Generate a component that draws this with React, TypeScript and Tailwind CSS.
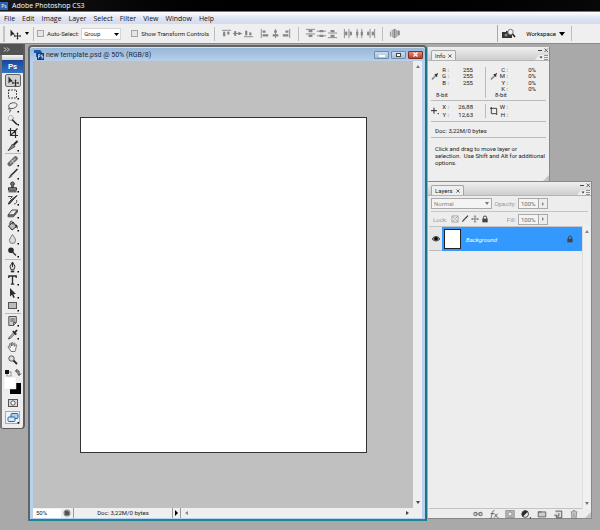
import type { ReactNode } from 'react';

const K = '#2b2b2b';

function Icon({ children, size = 'size-3' }: { children: ReactNode; size?: string }) {
  return (
    <svg viewBox="0 0 12 12" className={`${size} shrink-0`} fill="none" stroke={K} strokeWidth="1" aria-hidden="true">
      {children}
    </svg>
  );
}

const moveGlyph = (
  <>
    <path d="M1.5 1.5v7l1.8-1.7 2.7-.4z" fill={K} stroke="none" />
    <path d="M8.500 5v6M5.500 8h6" />
    <path d="M7.300 5.700l1.200-1.500 1.200 1.500zM7.300 10.300l1.200 1.500 1.200-1.500zM6.200 6.800L4.700 8l1.500 1.200zM10.800 6.800L12 8l-1.200 1.200z" fill={K} stroke="none" />
  </>
);
const brushGlyph = (
  <>
    <path d="M10.500 1L5 6.500" strokeWidth="1.600" />
    <path d="M5.800 6.200C5 9 3 10.500 1 10.300 2.300 9.500 2.500 7 4.500 5.500z" fill="#555" stroke="none" />
  </>
);
const dropperGlyph = (
  <>
    <path d="M7 4.500L2.500 9 1.500 11l2-.8L8 5.700" strokeWidth=".8" fill="#ddd" />
    <path d="M5.800 3.200l3.500 3.500M7.500 5L10 2" strokeWidth="1.900" />
  </>
);

const toolGroups: { name: string; menu: boolean; glyph: ReactNode }[][] = [
  [
    { name: 'Move', menu: false, glyph: moveGlyph },
    { name: 'Rectangular Marquee', menu: true, glyph: <rect x="1.500" y="2" width="8" height="8" strokeDasharray="1.600 1.200" /> },
    {
      name: 'Lasso',
      menu: true,
      glyph: <path d="M3.500 7.500C1 6.500 1 3.500 4 2.300s6.500-.3 6 2-4.500 4-7 3-1.500 2 .2 1.700S3 11 2 11.500" stroke="#555" />,
    },
    {
      name: 'Quick Selection',
      menu: true,
      glyph: (
        <>
          <circle cx="3.800" cy="4" r="2.500" stroke="#777" strokeDasharray="1 1" />
          <path d="M5 5.500l5 5" strokeWidth="1.700" />
        </>
      ),
    },
    { name: 'Crop', menu: false, glyph: <path d="M3.500 1v7.500H11M1 3.500h7.500V11M3.500 8.500L10.500 1.500" strokeWidth="1.200" /> },
    {
      name: 'Slice',
      menu: true,
      glyph: (
        <>
          <path d="M10.500 1L6.500 5" strokeWidth="2" />
          <path d="M5.500 4L8 6.500 4 9l-3 1.800z" fill="#888" strokeWidth=".7" />
        </>
      ),
    },
  ],
  [
    {
      name: 'Spot Healing Brush',
      menu: true,
      glyph: (
        <>
          <path d="M2.800 9L8.500 3.500" stroke="#666" strokeWidth="4.500" strokeLinecap="round" />
          <path d="M3.500 8L8 3.800" stroke="#aaa" strokeWidth="1.700" strokeLinecap="round" />
          <path d="M4.500 5l3 3.200" stroke="#eee" strokeWidth=".7" />
        </>
      ),
    },
    { name: 'Brush', menu: true, glyph: brushGlyph },
    {
      name: 'Clone Stamp',
      menu: true,
      glyph: (
        <>
          <circle cx="5.500" cy="2.800" r="1.800" fill="#777" />
          <path d="M4.800 4.500v2h1.400v-2M1.500 6.800h8v2.400h-8zM1.500 10.800h8" fill="#999" />
        </>
      ),
    },
    {
      name: 'History Brush',
      menu: true,
      glyph: (
        <>
          <path d="M10 1.500L5 7C4 9 2.500 10 1 10c1.300-1 1.500-3 3-4z" fill="#666" />
          <path d="M1 2.500h4.500L3 5M9.500 6c1 2-.5 4-2.500 4" stroke="#555" />
        </>
      ),
    },
    {
      name: 'Eraser',
      menu: true,
      glyph: (
        <>
          <path d="M1 8l4-5h5.500l-4 5z" fill="#eee" stroke="#444" />
          <path d="M1 8v1.800h5.500l4-4.800V3l-4 5z" fill="#777" stroke="#444" strokeWidth=".8" />
        </>
      ),
    },
    {
      name: 'Paint Bucket',
      menu: true,
      glyph: (
        <>
          <path d="M1.500 6L6 2l3.500 4.500L5 10z" fill="#bbb" />
          <path d="M3 4.500C2.500 0 6 0 6 4.500" />
          <path d="M8.500 4.500c2 0 2.500 2 2 4.500-1-1-1-2.500-2.500-2.500z" fill={K} stroke="none" />
        </>
      ),
    },
    { name: 'Blur', menu: true, glyph: <path d="M5.500 1.500C7 4 8.500 5.500 8.500 7.500a3 3 0 01-6 0c0-2 1.500-3.500 3-6z" fill="#ddd" stroke="#777" /> },
    {
      name: 'Dodge',
      menu: true,
      glyph: (
        <>
          <circle cx="4" cy="4.300" r="2.800" fill={K} stroke="none" />
          <path d="M5.500 6L9 9.500" strokeWidth="1.200" />
        </>
      ),
    },
  ],
  [
    {
      name: 'Pen',
      menu: true,
      glyph: (
        <>
          <path d="M5.500 1L3 5.500l1.200 3.300h2.600L8 5.500zM5.500 1v5" fill="#ddd" />
          <path d="M3.800 10.500h3.400" strokeWidth="1.700" />
        </>
      ),
    },
    { name: 'Horizontal Type', menu: true, glyph: <path d="M1.800 4V2h7.400v2M3.800 10.200h3.400M5.500 2v8" strokeWidth="1.300" /> },
    { name: 'Path Selection', menu: true, glyph: <path d="M3 1v8.500l2-1.800L6.300 11l1.500-.7-1.400-3L9 7z" fill={K} stroke="none" /> },
    { name: 'Rectangle', menu: true, glyph: <rect x="1.500" y="2.500" width="8" height="6" fill="#bbb" stroke="#555" /> },
  ],
  [
    {
      name: 'Notes',
      menu: true,
      glyph: (
        <>
          <path d="M1.800 1.500h7.500v6l-2.800 3H1.800z" fill="#ccc" stroke="#555" />
          <path d="M3.300 4h4.500M3.300 6h4.500M6.500 10.500v-3h2.800" stroke="#555" />
        </>
      ),
    },
    { name: 'Eyedropper', menu: true, glyph: dropperGlyph },
    {
      name: 'Hand',
      menu: false,
      glyph: (
        <path d="M4 10.500L1.200 6.200c-.5-1 .7-1.300 1.300-.5l.8.900-.8-3.400c0-1 1-1 1.300-.2L4.500 5V2c.2-.9 1.200-.9 1.300 0v2.500l.9-2.200c.5-.7 1.300-.4 1.200.5l-.5 2.500 1.300-1.500c.6-.5 1.200.1.900.8C8.500 7.500 9 9 8 10.500z" fill="#f4f4f4" stroke="#555" strokeWidth=".8" />
      ),
    },
    {
      name: 'Zoom',
      menu: false,
      glyph: (
        <>
          <circle cx="4.500" cy="4.500" r="2.700" fill="#ddd" stroke="#555" />
          <path d="M6.500 6.500l3.500 3.500" strokeWidth="1.800" />
        </>
      ),
    },
  ],
];

function Tools() {
  return (
    <aside aria-label="Tools" className="flex w-[25px] shrink-0 flex-col self-start rounded-b border-r-2 border-b border-[#5c5c5c] bg-[#ededed]">
      <div className="flex h-[11px] shrink-0 items-center border-l border-[#555] bg-[#535353] pl-[2px]">
        <svg viewBox="0 0 8 5" className="h-[5px] w-2" fill="none" stroke="#ddd" aria-hidden="true">
          <path d="M1 .5l2 2-2 2M4 .5l2 2-2 2" />
        </svg>
      </div>
      <div className="flex flex-col items-center border-l-2 border-[#777] pb-1">
        <div className="h-[5px] w-full bg-gradient-to-b from-[#f7f7f7] to-[#cfcfcf]" />
        <div className="mb-px flex h-[13px] w-full items-center justify-center bg-gradient-to-b from-[#1a4596] to-[#3472c6] text-[8px] leading-[13px] font-semibold text-white">Ps</div>
        {toolGroups.map((group, g) => (
          <div key={g} className={g === 0 ? 'flex flex-col' : 'mt-px flex flex-col border-t border-[#bbb]'}>
            {group.map((tool) => (
              <button
                key={tool.name}
                type="button"
                aria-label={tool.name}
                className={
                  tool.name === 'Move'
                    ? 'flex h-[13px] w-4 items-center justify-center rounded-[2px] border border-[#666] bg-[#d0d0d0]'
                    : 'flex h-[13px] w-4 items-center justify-center'
                }
              >
                <Icon>
                  {tool.glyph}
                  {tool.menu && <rect x="10.500" y="10" width="1.500" height="1.500" fill="#000" stroke="none" />}
                </Icon>
              </button>
            ))}
          </div>
        ))}
        <svg viewBox="0 0 20 29" className="h-[29px] w-5" aria-label="Foreground and background colors" role="img">
          <rect x="4" y="6" width="4" height="4" fill="#fff" stroke="#666" strokeWidth=".7" />
          <rect x="2" y="4" width="4" height="4" fill="#111" />
          <path d="M13 5h3v4M14.500 3L12.500 5l2 2M14.500 7.500l1.500 2 2-2" fill="none" stroke="#333" />
          <rect x="7" y="17" width="11" height="11" fill="#000" />
          <rect x="1" y="11" width="12" height="12" fill="#fff" stroke="#e0e0e0" strokeWidth=".5" />
        </svg>
        <button type="button" aria-label="Quick mask" className="flex h-4 items-center">
          <Icon>
            <rect x="1.500" y="2.500" width="9" height="7" fill="#ddd" stroke="#555" />
            <circle cx="6" cy="6" r="2.200" fill="#fff" stroke="#555" />
          </Icon>
        </button>
        <button type="button" aria-label="Screen mode" className="flex h-[13px] w-[15px] items-center justify-center border border-[#aaa] bg-[#f3f3f3]">
          <Icon>
            <rect x="4" y="1.500" width="7" height="5" rx="1" fill="#aad0f2" stroke="#2767a8" />
            <rect x="1" y="5" width="7" height="4.500" rx="1" fill="#d8ebfb" stroke="#2767a8" />
            <rect x="10.500" y="10" width="1.500" height="1.500" fill="#000" stroke="none" />
          </Icon>
        </button>
      </div>
    </aside>
  );
}

const alignGroups: { name: string; d: string }[][] = [
  [
    { name: 'Align top edges', d: 'M1 2.500h10M3.500 4v5M8 4v3' },
    { name: 'Align vertical centers', d: 'M1 6h10M3.500 3.500v5M8 4.500v3' },
    { name: 'Align bottom edges', d: 'M1 9.500h10M3.500 3v5M8 5v3' },
  ],
  [
    { name: 'Align left edges', d: 'M2.500 1v10M4 4h3M4 8h6' },
    { name: 'Align horizontal centers', d: 'M6 1v10M4.500 4h3M3 8h6' },
    { name: 'Align right edges', d: 'M9.500 1v10M5 4h3M2 8h6' },
  ],
  [
    { name: 'Distribute top edges', d: 'M1 1.500h10M1 6.500h10M4 3.500h4M4 8.500h4' },
    { name: 'Distribute vertical centers', d: 'M1 3.500h10M1 8.500h10M4 3.500h4M4 8.500h4' },
    { name: 'Distribute bottom edges', d: 'M1 5.500h10M1 10.500h10M4 3.500h4M4 8.500h4' },
  ],
  [
    { name: 'Distribute left edges', d: 'M1.500 1v10M6.500 1v10M3.500 4v4M8.500 4v4' },
    { name: 'Distribute horizontal centers', d: 'M3.500 1v10M8.500 1v10M3.500 4v4M8.500 4v4' },
    { name: 'Distribute right edges', d: 'M5.500 1v10M10.500 1v10M3.500 4v4M8.500 4v4' },
  ],
];

function AlignButton({ name, d }: { name: string; d: string }) {
  const thick = d.slice(d.lastIndexOf('M', d.lastIndexOf('M') - 1));
  return (
    <button type="button" aria-label={name} className="flex w-[11px] justify-center">
      <svg viewBox="0 0 12 12" className="size-[11px]" fill="none" stroke="#868686" aria-hidden="true">
        <path d={d} />
        <path d={thick} strokeWidth="2.400" />
      </svg>
    </button>
  );
}

const Rule = () => <span className="h-[14px] w-px shrink-0 bg-[#bdbdbd]" />;

function OptionsBar() {
  return (
    <div className="flex h-5 shrink-0 items-center border-b border-[#8b8b8b] bg-[#efefef] font-[Roboto,sans-serif] text-[6px] text-[#222]">
      <span className="ml-[3px] h-4 w-[2px] border-x border-[#c4c4c4]" />
      <button type="button" aria-label="Move tool options" className="ml-1 flex w-5 items-center gap-1">
        <Icon>{moveGlyph}</Icon>
        <svg viewBox="0 0 4 3" className="h-[3px] w-1" aria-hidden="true"><path d="M0 0h4L2 3z" /></svg>
      </button>
      <span className="ml-1 h-[14px] w-px bg-[#bdbdbd]" />
      <label className="ml-[3px] flex items-center gap-[3px]">
        <input type="checkbox" className="size-[7px] appearance-none border border-[#a5a5a5] bg-[#e5e5e5]" />
        Auto-Select:
      </label>
      <span className="relative ml-[2px] flex">
        <select aria-label="Auto-select target" className="h-3 w-10 appearance-none border border-[#d5d5d5] bg-white pl-[2px] leading-[10px]">
          <option>Group</option>
          <option>Layer</option>
        </select>
        <svg viewBox="0 0 5 3" className="pointer-events-none absolute top-[5px] right-[2px] h-[3px] w-[5px]" aria-hidden="true"><path d="M0 0h5L2.500 3z" /></svg>
      </span>
      <label className="ml-[10px] flex items-center gap-[3px] whitespace-nowrap">
        <input type="checkbox" className="size-[7px] appearance-none border border-[#a5a5a5] bg-[#e5e5e5]" />
        Show Transform Controls
      </label>
      <div className="ml-[5px] flex items-center gap-[6px]">
        <Rule />
        <div className="flex items-center gap-[5px]">
          {alignGroups.slice(0, 2).map((group, i) => (
            <div key={i} className="flex">{group.map((a) => <AlignButton key={a.name} {...a} />)}</div>
          ))}
        </div>
        <Rule />
        <div className="flex items-center gap-[5px]">
          {alignGroups.slice(2).map((group, i) => (
            <div key={i} className="flex">{group.map((a) => <AlignButton key={a.name} {...a} />)}</div>
          ))}
        </div>
        <Rule />
        <AlignButton name="Auto-align layers" d="M3.500 2v8M8.500 2v8M1.500 4v5M6 1v10M10.500 3v5" />
      </div>
      <div className="ml-auto flex items-center">
        <span className="h-[17px] w-px bg-[#aaa]" />
        <button type="button" aria-label="Go to Bridge" className="ml-1 flex">
          <svg viewBox="0 0 14 12" className="h-3 w-[14px]" fill="none" aria-hidden="true">
            <path d="M0 4h4V3h3v1h3v6H0z" fill="#333" />
            <circle cx="4" cy="7" r="1.500" fill="#888" />
            <circle cx="8.500" cy="4" r="2.700" fill="#eee" stroke="#777" />
            <path d="M10.500 6l2.500 3" stroke="#222" strokeWidth="1.500" />
          </svg>
        </button>
        <button type="button" className="ml-[10px] flex items-center gap-[3px] text-black">
          Workspace
          <svg viewBox="0 0 6 4" className="h-1 w-[6px]" aria-hidden="true"><path d="M0 0h6L3 4z" /></svg>
        </button>
        <span className="mr-7 ml-[6px] h-[15px] w-px bg-[#bdbdbd]" />
      </div>
    </div>
  );
}

function DocumentWindow() {
  const winBtn = 'flex h-2 w-[15px] items-center justify-center rounded-[1px] border border-[#6f8cab] bg-gradient-to-b from-[#c8dcf1] to-[#a4c0de]';
  return (
    <main className="mt-px flex min-w-0 flex-1 flex-col rounded-t-[4px] border-2 border-t-[#5e6468] border-r-[#1b7387] border-b-[#1b8699] border-l-[#5e6468] bg-[#b9d1ec]">
      <header className="flex h-[14px] shrink-0 items-center rounded-t-[3px] border-t border-[#d8e6f4] bg-gradient-to-b from-[#98b7d8] to-[#b7cfe9] pr-[2px] pl-1">
        <svg viewBox="0 0 10 10" className="size-[10px]" aria-hidden="true">
          <path d="M0 0h6l2 2v5H2V3H0z" fill="#1f57a8" />
          <rect x="3" y="3" width="7" height="7" fill="#123b7a" />
          <path d="M4.500 8.500v-4h1.500v2H4.500M9 5H7.500v1.500H9V8H7.300" fill="none" stroke="#cfe3ff" strokeWidth=".8" />
        </svg>
        <h1 className="ml-[2px] flex-1 text-[7px] leading-3 text-[#1a2a40]">new template.psd @ 50% (RGB/8)</h1>
        <div className="flex gap-[2px]">
          <button type="button" aria-label="Minimize" className={winBtn}><span className="mt-[2px] h-[2px] w-[6px] border border-white bg-[#555]" /></button>
          <button type="button" aria-label="Maximize" className={winBtn}><span className="h-1 w-[5px] border border-[#444] bg-white" /></button>
          <button type="button" aria-label="Close document" className="flex h-2 w-[15px] items-center justify-center rounded-[1px] border border-[#7d3026] bg-gradient-to-b from-[#e08c7a] to-[#c33a20]">
            <svg viewBox="0 0 5 5" className="size-[5px]" stroke="#fff" strokeWidth="1.300" aria-hidden="true"><path d="M.5.5l4 4M4.500.500l-4 4" /></svg>
          </button>
        </div>
      </header>
      <div className="mr-[3px] mb-px ml-[3px] flex min-h-0 flex-1 flex-col">
        <div className="flex flex-1">
          <div className="flex flex-1 bg-[#c0c0c0] pt-14 pr-[46px] pb-[55px] pl-[47px]">
            <div className="flex-1 border border-[#333] bg-white" />
          </div>
          <div className="flex w-[9px] flex-col items-center justify-between bg-[#eee] py-1">
            <svg viewBox="0 0 4 3" className="h-[3px] w-1" fill="#777" aria-hidden="true"><path d="M0 3h4L2 0z" /></svg>
            <svg viewBox="0 0 4 3" className="h-[3px] w-1" fill="#444" aria-hidden="true"><path d="M0 0h4L2 3z" /></svg>
          </div>
        </div>
        <footer className="flex h-[10px] items-center bg-[#efefef] text-[6px] leading-[10px] text-[#222]">
          <input aria-label="Zoom level" defaultValue="50%" className="h-[9px] w-7 bg-white pl-[3px]" />
          <span className="flex w-3 justify-center">
            <svg viewBox="0 0 8 8" className="size-2" aria-hidden="true">
              <circle cx="4" cy="4" r="3.500" fill="#888" />
              <path d="M2 3h3v3M2 5h2" stroke="#222" fill="none" />
            </svg>
          </span>
          <span className="w-[100px] border-x border-[#999] text-center">Doc: 3,22M/0 bytes</span>
          <button type="button" aria-label="Status menu" className="flex h-full w-2 items-center justify-center border-r border-[#999]">
            <svg viewBox="0 0 3 6" className="h-[6px] w-[3px]" aria-hidden="true"><path d="M0 0v6l3-3z" /></svg>
          </button>
          <span className="flex flex-1 justify-between pr-[13px] pl-1">
            <svg viewBox="0 0 3 4" className="h-1 w-[3px]" fill="#888" aria-hidden="true"><path d="M3 0v4L0 2z" /></svg>
            <svg viewBox="0 0 3 4" className="h-1 w-[3px]" fill="#444" aria-hidden="true"><path d="M0 0v4l3-2z" /></svg>
          </span>
        </footer>
      </div>
    </main>
  );
}

function PanelHeader({ title }: { title: string }) {
  return (
    <header className="flex h-[14px] shrink-0 items-end border-b border-[#b5b5b5] bg-gradient-to-b from-[#f0f0f0] to-[#cdcdcd] pl-[3px]">
      <h2 className="flex h-[10px] items-center gap-[3px] rounded-t-[2px] border border-b-0 border-[#a5a5a5] bg-[#eee] px-[3px] leading-[9px]">
        {title}
        <button type="button" aria-label={`Close ${title}`}>
          <svg viewBox="0 0 5 5" className="size-1" stroke="#444" aria-hidden="true"><path d="M.5.5l4 4M4.500.500l-4 4" /></svg>
        </button>
      </h2>
      <button type="button" aria-label={`${title} panel menu`} className="ml-auto flex">
        <svg viewBox="0 0 14 13" className="h-[13px] w-[14px]" fill="none" aria-hidden="true">
          <path d="M0 13l4-5h10v5z" fill="#eee" />
          <path d="M3 3.500h4" stroke="#444" />
          <path d="M9.500 1.500l3.500 3.500M13 1.500L9.500 5" stroke="#444" strokeWidth=".8" />
          <path d="M4.500 9.500h3L6 11.500z" fill="#333" />
          <path d="M9 8.500h4M9 10.500h4M9 12.500h4" stroke="#777" strokeWidth=".8" />
        </svg>
      </button>
    </header>
  );
}

function Readout({ rows, depth, icon }: { rows: [string, string][]; depth?: string; icon: ReactNode }) {
  return (
    <div className="flex flex-1 gap-px">
      <span className={depth ? 'mt-[5px] w-2' : 'flex w-2 items-center'}>{icon}</span>
      <dl className="flex flex-1 flex-col justify-between leading-[6px]">
        {rows.map(([k, v], i) => (
          <div key={i} className="flex h-[6px]">
            <dt className="flex w-[9px] shrink-0 justify-end whitespace-nowrap">{k && `${k} :`}</dt>
            <dd className="ml-auto">{v}</dd>
          </div>
        ))}
        {depth && <div className="-ml-1 whitespace-nowrap">{depth}</div>}
      </dl>
    </div>
  );
}

function InfoPanel() {
  const dropper = <Icon size="size-2">{dropperGlyph}</Icon>;
  return (
    <section className="flex h-[134px] w-[122px] flex-col border-r border-[#888] bg-[#eee]">
      <PanelHeader title="Info" />
      <div className="mx-[3px] flex h-10 gap-1 border-b border-[#bbb] pt-[6px] pb-[2px]">
        <div className="flex w-[55px] border-r border-[#bbb] pr-3">
          <Readout icon={dropper} depth="8-bit" rows={[['R', '255'], ['G', '255'], ['B', '255'], ['', '']]} />
        </div>
        <div className="flex flex-1 pr-[10px]">
          <Readout icon={dropper} depth="8-bit" rows={[['C', '0%'], ['M', '0%'], ['Y', '0%'], ['K', '0%']]} />
        </div>
      </div>
      <div className="mx-[3px] flex h-[21px] gap-1 border-b border-[#bbb] py-[3px]">
        <div className="flex w-[55px] border-r border-[#bbb] pr-3">
          <Readout
            icon={<Icon size="size-2"><path d="M4.500 1v9M0 5.500h9M10 10h2" strokeWidth="1.500" /></Icon>}
            rows={[['X', '26,88'], ['Y', '12,63']]}
          />
        </div>
        <div className="flex flex-1 pr-[10px]">
          <Readout
            icon={<Icon size="size-2"><path d="M2 0v10h8V2H0M10 10v2" strokeWidth="1.300" /></Icon>}
            rows={[['W', ''], ['H', '']]}
          />
        </div>
      </div>
      <p className="mx-[3px] h-4 border-b border-[#bbb] px-1 pt-1 leading-[10px]">Doc: 3,22M/0 bytes</p>
      <p className="flex-1 pt-[7px] pl-[7px] leading-[7px] whitespace-nowrap">
        Click and drag to move layer or<br />selection.&nbsp; Use Shift and Alt for additional<br />options.
      </p>
      <ResizeGrip />
    </section>
  );
}

function ResizeGrip() {
  return (
    <svg viewBox="0 0 6 6" className="size-[6px] shrink-0 self-end" fill="#c4c4c4" aria-hidden="true">
      <path d="M6 0v6H0z" />
    </svg>
  );
}

function Percent({ label }: { label: string }) {
  return (
    <label className="flex w-[55px] items-center justify-end gap-[2px] text-[#999]">
      {label}
      <span className="flex border border-[#aaa]">
        <input defaultValue="100%" className="h-[9px] w-[19px] bg-[#f4f4f4] pl-[2px] text-[#666]" />
        <span className="flex w-[9px] items-center justify-center border-l border-[#aaa]">
          <svg viewBox="0 0 2 4" className="h-1 w-[2px]" fill="#888" aria-hidden="true"><path d="M0 0v4l2-2z" /></svg>
        </span>
      </span>
    </label>
  );
}

const lockGlyph = (
  <>
    <path d="M3.500 6V4a2.500 2.500 0 015 0v2" stroke="#444" strokeWidth="1.500" />
    <rect x="2" y="5.500" width="8" height="5.500" fill="#444" stroke="none" />
  </>
);

const lockOptions: { name: string; glyph: ReactNode }[] = [
  {
    name: 'Lock transparent pixels',
    glyph: (
      <>
        <rect x="1.500" y="1.500" width="9" height="9" fill="#fff" stroke="#777" />
        <path d="M3 3h2v2H3zM7 3h2v2H7zM5 5h2v2H5zM3 7h2v2H3zM7 7h2v2H7z" fill="#aaa" stroke="none" />
      </>
    ),
  },
  { name: 'Lock image pixels', glyph: brushGlyph },
  { name: 'Lock position', glyph: <path d="M6 1v10M1 6h10M4.500 2.500L6 1l1.500 1.500M4.500 9.500L6 11l1.500-1.500M2.500 4.500L1 6l1.500 1.500M9.500 4.500L11 6 9.500 7.500" stroke="#555" /> },
  { name: 'Lock all', glyph: lockGlyph },
];

const layerActions: { name: string; glyph: ReactNode }[] = [
  {
    name: 'Link layers',
    glyph: (
      <>
        <circle cx="3" cy="6" r="2" stroke="#777" strokeWidth="1.300" />
        <circle cx="9" cy="6" r="2" stroke="#777" strokeWidth="1.300" />
        <path d="M3 6h6" stroke="#777" />
      </>
    ),
  },
  { name: 'Layer style', glyph: <path d="M1 11c2 1 2-2 2.500-5S5 1.500 6.500 2M2 5.500h4M6.500 5.500l4 5M10.500 5.500l-4.500 5M11.500 10.500h.5" stroke="#666" strokeWidth="1.200" /> },
  {
    name: 'Add layer mask',
    glyph: (
      <>
        <rect x="1" y="2" width="10" height="8" fill="#bbb" stroke="#888" />
        <circle cx="6" cy="6" r="2.500" fill="#eee" stroke="#888" />
      </>
    ),
  },
  {
    name: 'New adjustment layer',
    glyph: (
      <>
        <circle cx="5" cy="6" r="4" fill="#eee" />
        <path d="M2.200 8.800a4 4 0 015.600-5.600z" fill={K} />
        <path d="M10.500 10.500H12" strokeWidth="1.500" />
      </>
    ),
  },
  { name: 'New group', glyph: <path d="M1.500 3.500h9v6h-9zM1.500 3.500h4" fill="#ccc" stroke="#555" /> },
  { name: 'New layer', glyph: <path d="M3 2.500h7.500v8H4v-3H1.500M7 5v3.500H4" fill="#ddd" stroke="#444" /> },
  { name: 'Delete layer', glyph: <path d="M2 3.500h8M4.500 2h3M3 4l.5 7h5L9 4M5 5v5M7 5v5" stroke="#777" /> },
];

function LayersPanel() {
  return (
    <section className="flex flex-1 flex-col border-t border-r border-b border-[#888] bg-[#ededed]">
      <PanelHeader title="Layers" />
      <div className="mx-[3px] flex h-4 items-center border-b border-[#c4c4c4]">
        <span className="relative flex w-[62px]">
          <select aria-label="Blend mode" className="h-[11px] w-[61px] appearance-none border border-[#aaa] bg-[#f4f4f4] pl-[2px] leading-[9px] text-[#888]">
            <option>Normal</option>
          </select>
          <svg viewBox="0 0 4 3" className="pointer-events-none absolute top-1 right-1 h-[3px] w-1" fill="#777" aria-hidden="true"><path d="M0 0h4L2 3z" /></svg>
        </span>
        <Percent label="Opacity:" />
      </div>
      <div className="mx-[3px] flex h-[14px] items-center text-[#999]">
        <span className="flex w-[62px] items-center gap-[2px] pl-[2px]">
          <span className="w-4">Lock:</span>
          {lockOptions.map((o) => (
            <button key={o.name} type="button" aria-label={o.name}><Icon size="size-2">{o.glyph}</Icon></button>
          ))}
        </span>
        <Percent label="Fill:" />
      </div>
      <div className="mx-px flex flex-1">
        <div className="flex min-w-0 flex-1 flex-col border-t border-b border-[#c4c4c4]">
          <div className="flex h-6 items-center bg-[#3399ff]">
            <button type="button" aria-label="Toggle visibility" className="flex h-full w-[13px] items-center justify-center border-b border-[#bbb] bg-[#e6e6e6]">
              <Icon size="size-2">
                <path d="M0 6c3-5 9-5 12 0-3 4-9 4-12 0z" fill="#888" />
                <circle cx="6" cy="5.500" r="2.500" fill="#000" />
              </Icon>
            </button>
            <span className="ml-[2px] h-5 w-[17px] border border-[#222] bg-white" />
            <span className="ml-[5px] flex-1 text-white italic">Background</span>
            <span className="mr-2 flex"><Icon size="size-2">{lockGlyph}</Icon></span>
          </div>
        </div>
        <div className="flex w-2 flex-col items-center justify-between border-l border-[#ddd] bg-[#f1f1f1] py-1">
          <svg viewBox="0 0 4 3" className="h-[3px] w-1" fill="#888" aria-hidden="true"><path d="M0 3h4L2 0z" /></svg>
          <svg viewBox="0 0 4 3" className="h-[3px] w-1" fill="#777" aria-hidden="true"><path d="M0 0h4L2 3z" /></svg>
        </div>
      </div>
      <footer className="flex h-[9px] items-center justify-end gap-[6px]">
        <div className="flex gap-[6px]">
          {layerActions.map((a) => (
            <button key={a.name} type="button" aria-label={a.name}><Icon size="size-[10px]">{a.glyph}</Icon></button>
          ))}
        </div>
        <ResizeGrip />
      </footer>
    </section>
  );
}

const menus = ['File', 'Edit', 'Image', 'Layer', 'Select', 'Filter', 'View', 'Window', 'Help'];

export default function App() {
  return (
    <div className="flex min-h-screen flex-col bg-[#a9a9a9] font-['Open_Sans','Noto_Sans',sans-serif] text-black">
      <div className="flex h-[11px] shrink-0 items-center gap-1 bg-gradient-to-r from-[#1a1a1a] via-black to-[#080808] text-[7px] leading-[11px] text-white">
        <span className="flex size-2 items-center justify-center bg-[#2b62b0] text-[5px] leading-[8px]">Ps</span>
        Adobe Photoshop CS3
      </div>
      <nav className="flex h-[13px] shrink-0 items-center gap-[7px] border-t border-[#777] bg-gradient-to-b from-white via-[#dfe5f5] to-[#d3dbf0] pl-1 text-[7px] leading-[11px] text-[#111]">
        {menus.map((m) => (
          <button key={m} type="button">{m}</button>
        ))}
      </nav>
      <OptionsBar />
      <div className="flex flex-1 font-[Roboto,sans-serif] text-[6px] text-[#222]">
        <Tools />
        <div className="ml-[3px] flex min-w-0 flex-1 pb-[9px]">
          <DocumentWindow />
          <div className="mt-[3px] mb-[2px] ml-px flex w-[172px] shrink-0 flex-col pr-2">
            <InfoPanel />
            <LayersPanel />
          </div>
        </div>
      </div>
    </div>
  );
}
